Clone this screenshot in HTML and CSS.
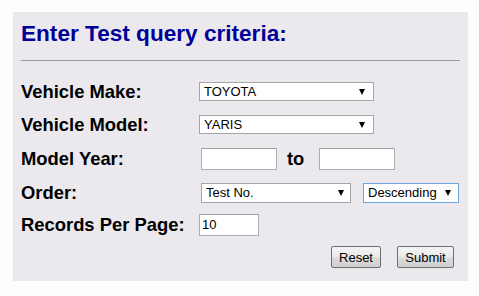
FILE: index.html
```html
<!DOCTYPE html>
<html>
<head>
<meta charset="utf-8">
<link rel="stylesheet" href="styles.css">
</head>
<body>
<form class="panel">
  <h1 class="title">Enter Test query criteria:</h1>
  <hr class="rule">
  <div class="row r-make">
    <label class="lbl">Vehicle Make:</label>
    <span class="sel w-make"><select class="ctl"><option>TOYOTA</option></select></span>
  </div>
  <div class="row r-model">
    <label class="lbl">Vehicle Model:</label>
    <span class="sel w-make"><select class="ctl"><option>YARIS</option></select></span>
  </div>
  <div class="row r-year">
    <label class="lbl">Model Year:</label>
    <input class="txt w-year shift" type="text">
    <span class="to">to</span>
    <input class="txt w-year" type="text">
  </div>
  <div class="row r-order">
    <label class="lbl">Order:</label>
    <span class="sel w-test shift"><select class="ctl"><option>Test No.</option></select></span>
    <span class="sel w-desc focus"><select class="ctl"><option>Descending</option></select></span>
  </div>
  <div class="row r-rec">
    <label class="lbl">Records Per Page:</label>
    <input class="txt w-rec" type="text" value="10">
  </div>
  <div class="row r-btn">
    <button type="button" class="btn w-reset">Reset</button>
    <button type="button" class="btn w-submit">Submit</button>
  </div>
</form>
</body>
</html>
```
FILE: styles.css
```css
html, body {
  margin: 0;
  padding: 0;
  background: #fcfdfc;
}
body {
  font-family: "Liberation Sans", Arial, sans-serif;
}
.panel {
  margin: 12px 0 0 13px;
  width: 455px;
  height: 269px;
  box-sizing: border-box;
  padding: 8px;
  background: #ebe9ed;
}
.title {
  margin: 1px 0 0 0;
  font-size: 22.6px;
  line-height: 25px;
  font-weight: bold;
  color: #000099;
}
.rule {
  margin: 14px 0 14px 0;
  border: 0;
  border-top: 1px solid #9a9a9a;
  height: 0;
}
.row {
  display: flex;
  align-items: center;
}
.r-make { height: 33px; }
.r-model { height: 33px; }
.r-year { height: 36px; }
.r-order { height: 31px; }
.r-rec { height: 33px; }
.r-btn { height: 32px; justify-content: flex-end; padding-right: 6px; }
.lbl {
  width: 178px;
  flex: none;
  font-size: 18.4px;
  font-weight: bold;
  color: #000;
}
.sel {
  position: relative;
  display: inline-block;
  height: 19px;
}
.sel::after {
  content: "";
  position: absolute;
  right: 9px;
  top: 7px;
  width: 0;
  height: 0;
  border-left: 3.5px solid transparent;
  border-right: 3.5px solid transparent;
  border-top: 6px solid #000;
  pointer-events: none;
}
.ctl {
  appearance: none;
  -webkit-appearance: none;
  width: 100%;
  height: 100%;
  box-sizing: border-box;
  margin: 0;
  border: 1px solid #a6a6a6;
  border-radius: 0;
  background: #fff;
  padding: 0 0 0 4px;
  font-family: "Liberation Sans", Arial, sans-serif;
  font-size: 13px;
  color: #000;
  outline: none;
}
.w-make { width: 175px; }
.w-test { width: 150px; height: 20px; }
.w-desc { width: 96px; height: 20px; margin-left: 12px; }
.w-desc::after { right: 8px; top: 7px; }
.w-test::after { right: 7px; top: 7px; }
.focus .ctl { border-color: #6ea5e0; }
.txt {
  box-sizing: border-box;
  height: 22px;
  margin: 0;
  border: 1px solid #abadb3;
  border-top-color: #a0a0a0;
  background: #fff;
  padding: 0 2px;
  font-family: "Liberation Sans", Arial, sans-serif;
  font-size: 13px;
  color: #000;
  outline: none;
}
.shift { margin-left: 2px; }
.w-year { width: 76px; }
.w-rec { width: 60px; }
.to {
  font-size: 18.4px;
  font-weight: bold;
  margin: 0 15px 0 10px;
  color: #000;
}
.btn {
  box-sizing: border-box;
  height: 22px;
  margin: 0;
  padding: 0;
  border: 1px solid #707070;
  border-radius: 2px;
  background: linear-gradient(#f3f3f3, #ebebeb 50%, #dddddd 51%, #cfcfcf);
  font-family: "Liberation Sans", Arial, sans-serif;
  font-size: 13px;
  color: #000;
}
.w-reset { width: 50px; }
.w-submit { width: 57px; margin-left: 16px; }
```
